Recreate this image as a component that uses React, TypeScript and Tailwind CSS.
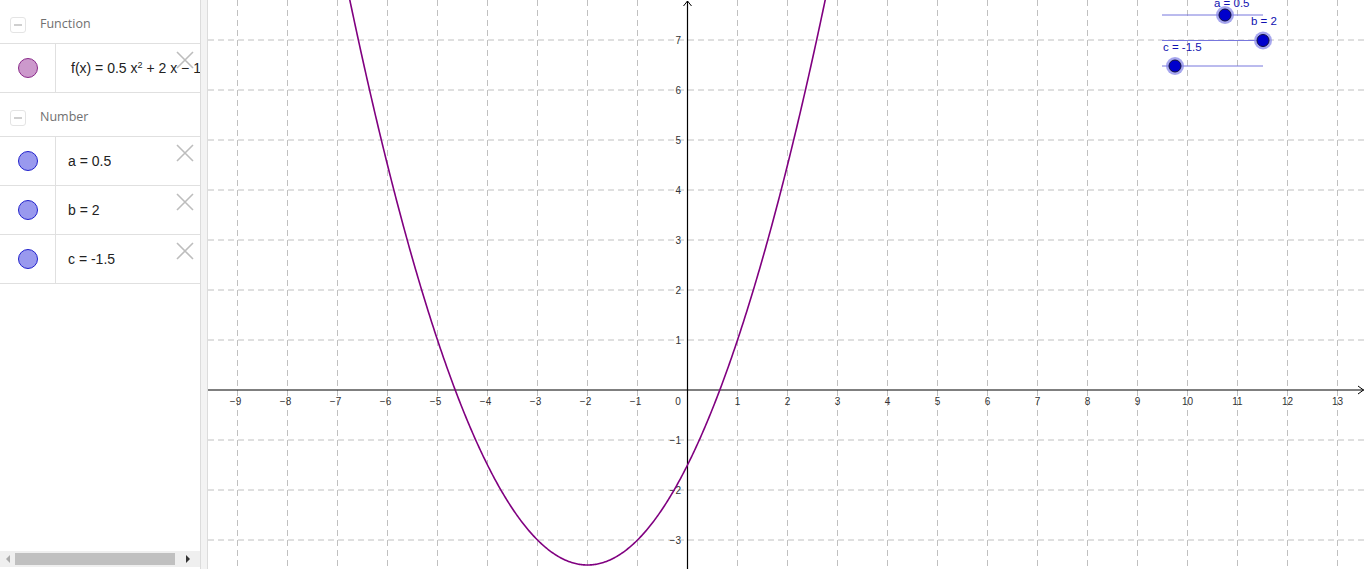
import React from "react";

const OX = 687.5;
const OY = 390;
const U = 50;
const sx = (x: number) => OX + U * x;
const sy = (y: number) => OY - U * y;

function parabolaPath() {
  const pts: string[] = [];
  for (let x = -7.2; x <= 3.0001; x += 0.02) {
    const f = 0.5 * x * x + 2 * x - 1.5;
    pts.push(`${sx(x).toFixed(2)},${sy(f).toFixed(2)}`);
  }
  return "M" + pts.join(" L");
}

function CloseX() {
  return (
    <svg width="20" height="20" viewBox="0 0 20 20" className="absolute right-[5px] top-[6px]">
      <path d="M2 2 L18 18 M18 2 L2 18" stroke="#bdbdbd" strokeWidth="1.6" />
    </svg>
  );
}

function Header({ label }: { label: string }) {
  return (
    <div className="h-[44px] pt-[6px] flex items-center border-b border-[#e0e0e0]">
      <div className="ml-[10px] w-[16px] h-[16px] border border-[#e4e4e4] rounded-[3px] flex items-center justify-center">
        <div className="w-[8px] h-[2px] bg-[#cfcfcf]" />
      </div>
      <span className="ml-[14px] text-[12.5px] text-[#707070]" style={{ fontFamily: '"Open Sans", sans-serif' }}>
        {label}
      </span>
    </div>
  );
}

function Row({
  fill,
  stroke,
  pl = "pl-[12px]",
  children,
}: {
  fill: string;
  stroke: string;
  pl?: string;
  children: React.ReactNode;
}) {
  return (
    <div className="relative h-[49px] flex border-b border-[#e0e0e0]">
      <div className="w-[56px] flex items-center justify-center border-r border-[#e0e0e0] shrink-0">
        <div className="w-[20px] h-[20px] rounded-full border" style={{ backgroundColor: fill, borderColor: stroke }} />
      </div>
      <div
        className={`flex items-center ${pl} text-[14px] text-[#222] whitespace-nowrap overflow-hidden`}
        style={{ fontFamily: '"Liberation Sans", Arial, sans-serif' }}
      >
        {children}
      </div>
      <CloseX />
    </div>
  );
}

function Graph() {
  const vLines: number[] = [];
  for (let k = -9; k <= 13; k++) if (k !== 0) vLines.push(k);
  const hLines: number[] = [];
  for (let k = -3; k <= 7; k++) if (k !== 0) hLines.push(k);
  const labelFont = '"Liberation Sans", Arial, sans-serif';
  const fmt = (k: number) => (k < 0 ? "\u2212" + Math.abs(k) : String(k));
  return (
    <svg width="1158" height="569" viewBox="208 0 1158 569" className="block">
      <rect x="208" y="0" width="1158" height="569" fill="#ffffff" />
      {vLines.map((k) => (
        <line key={"v" + k} x1={sx(k)} y1={0} x2={sx(k)} y2={569} stroke="#c0c0c0" strokeWidth="1" strokeDasharray="6 4" />
      ))}
      {hLines.map((k) => (
        <line key={"h" + k} x1={208} y1={sy(k)} x2={1366} y2={sy(k)} stroke="#c0c0c0" strokeWidth="1" strokeDasharray="6 4" />
      ))}
      <line x1={208} y1={OY} x2={1364} y2={OY} stroke="#000" strokeWidth="1.2" />
      <path d="M1358 386 L1363.5 390 L1358 394" fill="none" stroke="#000" strokeWidth="1" />
      <line x1={OX} y1={1} x2={OX} y2={569} stroke="#000" strokeWidth="1.2" />
      <path d="M683.5 6 L687.5 1 L691.5 6" fill="none" stroke="#000" strokeWidth="1" />
      {vLines.map((k) => (
        <text
          key={"xl" + k}
          x={sx(k) + (k < 0 ? -2 : 0)}
          y={405}
          fontSize="10"
          textAnchor="middle"
          fill="#333"
          style={{ fontFamily: labelFont }}
        >
          {fmt(k)}
        </text>
      ))}
      <text x={678} y={405} fontSize="10" textAnchor="middle" fill="#333" style={{ fontFamily: labelFont }}>
        0
      </text>
      {hLines.map((k) => (
        <text
          key={"yl" + k}
          x={681}
          y={sy(k) + 3.5}
          fontSize="10"
          textAnchor="end"
          fill="#333"
          style={{ fontFamily: labelFont }}
        >
          {fmt(k)}
        </text>
      ))}
      <path d={parabolaPath()} fill="none" stroke="#800080" strokeWidth="1.6" />
      <g style={{ fontFamily: labelFont }}>
        <line x1={1162} y1={15} x2={1263} y2={15} stroke="#7777dd" strokeWidth="1" />
        <line x1={1162} y1={40.5} x2={1263} y2={40.5} stroke="#7777dd" strokeWidth="1" />
        <line x1={1162} y1={66} x2={1263} y2={66} stroke="#7777dd" strokeWidth="1" />
        <text x={1214} y={7} fontSize="11.5" fill="#1010b0">a = 0.5</text>
        <text x={1251} y={25} fontSize="11.5" fill="#1010b0">b = 2</text>
        <text x={1163} y={51} fontSize="11.5" fill="#1010b0">c = -1.5</text>
        {[
          [1225, 15],
          [1263, 40.5],
          [1175, 66],
        ].map(([cx, cy], i) => (
          <g key={i}>
            <circle cx={cx} cy={cy} r={9} fill="#8888e8" opacity="0.75" />
            <circle cx={cx} cy={cy} r={6} fill="#0000cc" stroke="#101040" strokeWidth="1" />
          </g>
        ))}
      </g>
    </svg>
  );
}

export default function App() {
  return (
    <div className="w-[1366px] h-[569px] flex overflow-hidden bg-white">
      <div className="w-[200px] h-full flex flex-col shrink-0 relative">
        <Header label="Function" />
        <Row fill="#cc99cc" stroke="#8a2a8a" pl="pl-[15px]">
          <span>
            f(x) = 0.5 x<sup className="text-[9px]">2</sup> + 2 x − 1.5
          </span>
        </Row>
        <Header label="Number" />
        <Row fill="#9999ee" stroke="#2222cc">
          <span>a = 0.5</span>
        </Row>
        <Row fill="#9999ee" stroke="#2222cc">
          <span>b = 2</span>
        </Row>
        <Row fill="#9999ee" stroke="#2222cc">
          <span>c = -1.5</span>
        </Row>
        <div className="flex-1" />
        <div className="h-[16px] mb-[2px] bg-[#efefef] flex items-center">
          <div className="w-[15px] flex justify-center">
            <div className="w-0 h-0 border-y-[4px] border-y-transparent border-r-[4px] border-r-[#aaaaaa]" />
          </div>
          <div className="w-[160px] h-[12px] bg-[#c0c0c0]" />
          <div className="flex-1 flex justify-center">
            <div className="w-0 h-0 border-y-[4px] border-y-transparent border-l-[4px] border-l-[#333333]" />
          </div>
        </div>
      </div>
      <div className="w-[8px] h-full bg-[#f3f3f3] border-l border-r border-[#dcdcdc] shrink-0" />
      <div className="flex-1 h-full overflow-hidden">
        <Graph />
      </div>
    </div>
  );
}
